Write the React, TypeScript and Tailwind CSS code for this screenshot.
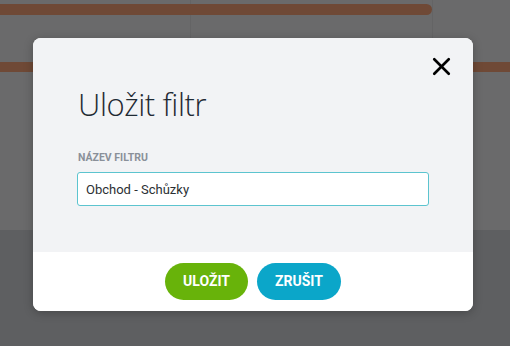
import React from 'react';
import { X } from 'lucide-react';

const SaveFilterModal: React.FC = () => {
  return (
    <div className="absolute inset-0 flex items-start pt-[38px] pl-[33px]">
      <div className="relative w-[440px] overflow-hidden rounded-[8px] bg-white shadow-[0_2px_10px_rgba(0,0,0,0.25)]">
        <button className="absolute right-[17px] top-[14px] text-black">
          <X className="h-[29px] w-[29px]" strokeWidth={2.2} />
        </button>
        <div className="h-[214px] bg-[#f2f3f5] px-[44px] pt-[46px]">
          <h2 className="ml-[1px] text-[31px] font-light leading-[40px] tracking-[-0.4px] text-[#1f2a33] [font-family:'Open_Sans',sans-serif]">
            Uložit filtr
          </h2>
          <label className="mt-[27px] block pl-[1px] text-[10.5px] font-bold leading-[14px] text-[#8a9099] [font-family:Roboto,sans-serif]">
            NÁZEV FILTRU
          </label>
          <input
            defaultValue="Obchod - Schůzky"
            className="mt-[7px] block h-[34px] w-[352px] rounded-[3px] border border-[#5cc4cf] bg-white px-[8px] text-[13px] text-[#2b2f33] outline-none [font-family:Roboto,sans-serif]"
          />
        </div>
        <div className="flex h-[59px] items-center justify-center gap-[9px] bg-white [font-family:Roboto,sans-serif]">
          <button className="h-[37px] w-[83px] rounded-full bg-[#68b30a] text-[14px] font-bold text-white">
            ULOŽIT
          </button>
          <button className="h-[37px] w-[84px] rounded-full bg-[#0ba6c9] text-[14px] font-bold text-white">
            ZRUŠIT
          </button>
        </div>
      </div>
    </div>
  );
};

export default function App() {
  return (
    <div className="relative h-[346px] w-[510px] overflow-hidden bg-[#5e5f61]">
      <div className="relative h-[230px] bg-[#6a6a6b] pt-[4px]">
        <div className="absolute bottom-0 left-[190px] top-0 w-px bg-[#646465]" />
        <div className="absolute bottom-0 left-[432px] top-0 w-px bg-[#646465]" />
        <div className="relative h-[11px] w-[432px] rounded-r-full bg-[#6f4936]" />
        <div className="relative mt-[47px] h-[10px] w-full bg-[#6f4936]" />
      </div>
      <SaveFilterModal />
    </div>
  );
}
